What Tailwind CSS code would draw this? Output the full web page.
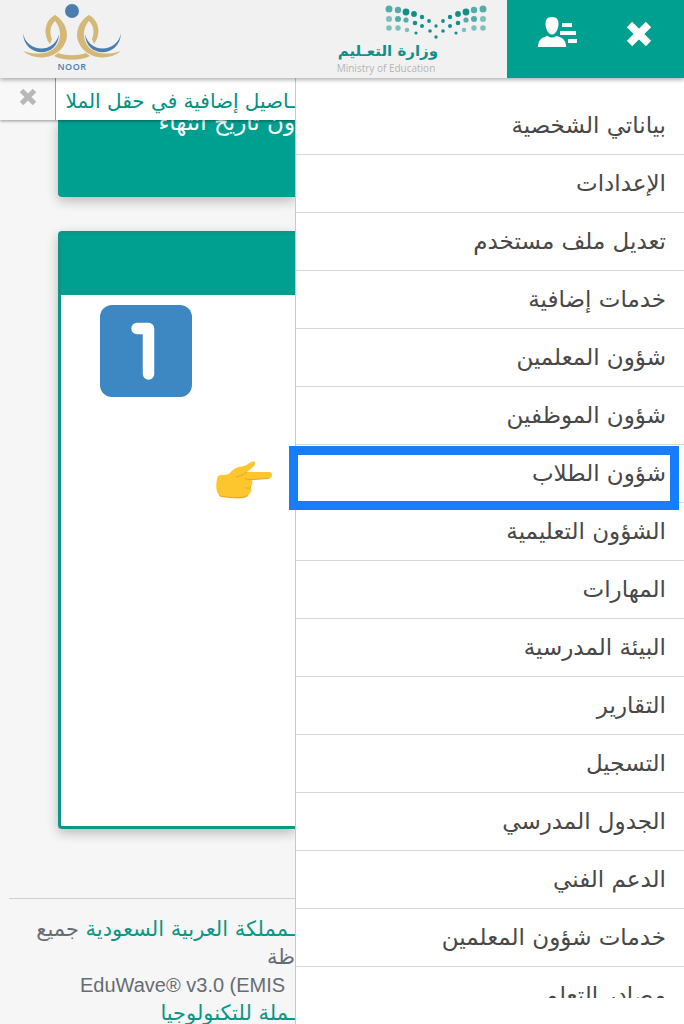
<!DOCTYPE html>
<html lang="ar" dir="rtl">
<head>
    <meta charset="UTF-8">
    <meta name="viewport" content="width=device-width, initial-scale=1.0">
    <title>نور</title>
    <script src="https://cdn.jsdelivr.net/npm/@tailwindcss/browser@4"></script>
</head>
<body class="bg-[#f6f6f6] font-['DejaVu_Sans',sans-serif]">
    <div class="flex flex-col h-screen overflow-hidden">
        <!-- Header -->
        <header class="relative z-20 flex h-[78px] shrink-0 bg-[#f1f1f1] shadow-[0_2px_4px_rgba(0,0,0,0.3)]">
            <div class="flex w-[177px] shrink-0 items-start bg-[#00a090] text-white">
                <button type="button" aria-label="إغلاق" class="ms-[32px] mt-[20px]">
                    <svg width="26" height="28" viewBox="0 0 26 28" class="block"><path d="M3.500 4.500 22.500 23.500M22.500 4.500 3.500 23.500" stroke="currentColor" stroke-width="7.500"/></svg>
                </button>
                <button type="button" aria-label="الحساب" class="ms-[48px] mt-[16px]">
                    <svg width="40" height="32" viewBox="0 0 40 32" fill="currentColor" class="block"><path d="M14 1c4 0 6.500 2 6.500 6.500 0 5-2.500 11-6.500 11s-6.500-6-6.500-11C7.500 3 10 1 14 1z"/><path d="M9.500 20c3 2 6 2 9 0 5 1.500 9.500 3 9.500 11H0c0-8 4.500-9.500 9.500-11z"/><path d="M24 7h10v4H24zM22 15h16v4H22zM30 23h9v4h-9z"/></svg>
                </button>
            </div>
            <a href="#" aria-label="وزارة التعليم" class="mr-[19px] block w-[154px]" dir="ltr">
                <svg width="154" height="41" viewBox="0 0 154 41" fill="#128f8a" class="block">
                    <g opacity=".7">
                        <circle cx="55" cy="9" r="3.500"/><circle cx="64" cy="10" r="3.200"/><circle cx="140" cy="10" r="3.200"/><circle cx="149" cy="9" r="3.500"/>
                        <circle cx="64" cy="19" r="3"/><circle cx="72" cy="20" r="2.600"/><circle cx="132" cy="20" r="2.600"/><circle cx="140" cy="19" r="3"/>
                    </g>
                    <g opacity=".5">
                        <circle cx="55" cy="19" r="3"/><circle cx="55" cy="28" r="2.800"/><circle cx="64" cy="28" r="2.700"/><circle cx="73" cy="30" r="2.200"/>
                        <circle cx="149" cy="19" r="3"/><circle cx="149" cy="28" r="2.800"/><circle cx="140" cy="28" r="2.700"/><circle cx="130" cy="30" r="2.200"/>
                    </g>
                    <circle cx="72" cy="12" r="3.400"/><circle cx="80" cy="14" r="2.900"/><circle cx="88" cy="17" r="2.200"/><circle cx="95" cy="21" r="1.900"/><circle cx="102" cy="26" r="1.700"/>
                    <circle cx="109" cy="21" r="1.900"/><circle cx="116" cy="17" r="2.200"/><circle cx="124" cy="14" r="2.900"/><circle cx="132" cy="12" r="3.400"/>
                    <circle cx="81" cy="23" r="2.300"/><circle cx="88" cy="26" r="2"/><circle cx="96" cy="31" r="1.800"/><circle cx="102" cy="37" r="1.700"/>
                    <circle cx="109" cy="31" r="1.800"/><circle cx="116" cy="26" r="2"/><circle cx="124" cy="23" r="2.300"/><circle cx="82" cy="33" r="1.600"/><circle cx="122" cy="33" r="1.600"/>
                </svg>
                <span class="block w-[104px] text-right whitespace-nowrap text-[15px] leading-[20px] font-bold text-[#128f8a]" dir="rtl">وزارة التعـليم</span>
                <span class="block w-[104px] text-center whitespace-nowrap font-['Open_Sans',sans-serif] text-[10px] leading-[14px] text-[#b5b5b5]">Ministry of Education</span>
            </a>
            <a href="#" class="ms-auto me-[22px] mt-[3px] block w-[100px] text-center">
                <svg width="100" height="58" viewBox="0 0 100 58" fill="none" class="block">
                    <circle cx="50" cy="8" r="7" fill="#4b7eae"/>
                    <path d="M33 12C22 18 21 32 28 41l2-5c-3-7-2-14 5-20z" fill="#d3b877"/>
                    <path d="M67 12c11 6 12 20 5 29l-2-5c3-7 2-14-5-20z" fill="#d3b877"/>
                    <path d="M33 12c10 6 15 18 10 28-6 14-27 20-42 8 14 5 30 3 35-8 4-8 2-18-5-24z" fill="#d3b877"/>
                    <path d="M67 12c-10 6-15 18-10 28 6 14 27 20 42 8-14 5-30 3-35-8-4-8-2-18 5-24z" fill="#d3b877"/>
                    <path d="M36 50c8 3 20 3 28 0l4 3c-9 5-27 5-36 0z" fill="#d3b877"/>
                    <path d="M1 30c3 19 31 22 36 1-1 25-35 24-36-1z" fill="#4b7eae"/>
                    <path d="M63 31c5 21 33 18 36-1-1 25-35 26-36 1z" fill="#4b7eae"/>
                </svg>
                <span class="block font-['Open_Sans',sans-serif] text-[9px] leading-[12px] font-semibold tracking-wider text-[#4b7eae]">NOOR</span>
            </a>
        </header>

        <div class="flex min-h-0 flex-1">
            <!-- Side menu -->
            <nav class="relative z-10 flex w-[389px] shrink-0 flex-col border-e border-[#c8c8c8] bg-white pt-[19px] pb-[26px]">
                <ul class="min-h-0 flex-1 overflow-y-clip text-[23px] leading-[57px] text-[#484848] *:h-[58px] *:border-b *:border-[#d6d6d6] *:px-[18px]">
                    <li><a href="#" class="block">بياناتي الشخصية</a></li>
                    <li><a href="#" class="block">الإعدادات</a></li>
                    <li><a href="#" class="block">تعديل ملف مستخدم</a></li>
                    <li><a href="#" class="block">خدمات إضافية</a></li>
                    <li><a href="#" class="block">شؤون المعلمين</a></li>
                    <li><a href="#" class="block">شؤون الموظفين</a></li>
                    <li class="relative">
                        <a href="#" class="block">شؤون الطلاب</a>
                        <span class="pointer-events-none absolute top-px -bottom-[8px] right-[5px] -left-[7px] border-[9px] border-[#187dfb]"></span>
                    </li>
                    <li><a href="#" class="block">الشؤون التعليمية</a></li>
                    <li><a href="#" class="block">المهارات</a></li>
                    <li><a href="#" class="block">البيئة المدرسية</a></li>
                    <li><a href="#" class="block">التقارير</a></li>
                    <li><a href="#" class="block">التسجيل</a></li>
                    <li><a href="#" class="block">الجدول المدرسي</a></li>
                    <li><a href="#" class="block">الدعم الفني</a></li>
                    <li><a href="#" class="block">خدمات شؤون المعلمين</a></li>
                    <li><a href="#" class="block">مصادر التعلم</a></li>
                </ul>
            </nav>

            <!-- Page behind the menu -->
            <main class="min-w-0 flex-1 overflow-hidden">
                <div class="relative z-10 flex h-[42px] bg-white shadow-[0_1px_3px_rgba(0,0,0,0.4)]">
                    <p class="min-w-0 flex-1 overflow-hidden whitespace-nowrap border-e border-[#999] text-[20px] leading-[46px] text-[#00917f]">ـاصيل إضافية في حقل الملا</p>
                    <button type="button" aria-label="إغلاق" class="flex w-[55px] shrink-0 justify-center bg-[#f8f8f8] pt-[10px] text-[#b8b8b8]">
                        <svg width="18" height="18" viewBox="0 0 18 18" class="block"><path d="M2.500 2.500 15.500 15.500M15.500 2.500 2.500 15.500" stroke="currentColor" stroke-width="5"/></svg>
                    </button>
                </div>
                <section class="me-[58px] h-[77px] overflow-hidden rounded-bl bg-[#00a090] text-[23px] leading-[4px] text-white shadow-[0_4px_12px_rgba(0,0,0,0.25)]">
                    <p class="whitespace-nowrap">ون تاريخ انتهاء</p>
                </section>
                <section class="relative me-[58px] mt-[34px] h-[598px] rounded-l border-3 border-s-0 border-[#0b9686] bg-white shadow-[0_4px_12px_rgba(0,0,0,0.25)]">
                    <div class="h-[61px] bg-[#00a090]"></div>
                    <svg width="92" height="92" viewBox="0 0 92 92" class="absolute left-[39px] top-[71px]"><rect width="92" height="92" rx="12" fill="#3d88c3"/><path d="M37 23.500h11.500V69" fill="none" stroke="#fff" stroke-width="11.500" stroke-linecap="round" stroke-linejoin="round"/></svg>
                    <svg width="58" height="40" viewBox="0 0 58 40" class="absolute left-[154px] top-[227px]">
                        <path d="M3 15c4-2 8 0 12-3 4-5 8-6 14-7 4-1 6-5 10-4.500 2 1 1 4-1 5.500L32 11h22c4 0 4 6 0 6.500l-17 1c1 3 0 6-1 8 1 4-1 6-3 8-4 4-12 3-17 2.500-4-1-9 0-12-3C0 30 1 20 3 15z" fill="#fec62e"/>
                        <path d="M32 11c-3 2-6 4-11 5M54 17.500l-17 1c-3 0-6 0-7-1M36 26.500c-1 1-4 1-6 0M4 34.500c3 2 8 1 12 2 5 0 13 1 17-2" fill="none" stroke="#e9a51f"/>
                    </svg>
                </section>
                <footer class="me-[9px] mt-[69px] border-t border-[#cfcfcf] pt-[16px] text-[21px] leading-[28px] text-[#666c73]">
                    <p class="whitespace-nowrap"><a href="#" class="text-[#0b9686]">ـمملكة العربية السعودية</a> جميع</p>
                    <p>ظة</p>
                    <p class="pl-[71px] text-left whitespace-nowrap font-['Liberation_Sans',sans-serif] text-[20px]" dir="ltr">EduWave® v3.0 (EMIS</p>
                    <p class="whitespace-nowrap"><a href="#" class="text-[#0b9686]">ـملة للتكنولوجيا</a></p>
                </footer>
            </main>
        </div>
    </div>
</body>
</html>
